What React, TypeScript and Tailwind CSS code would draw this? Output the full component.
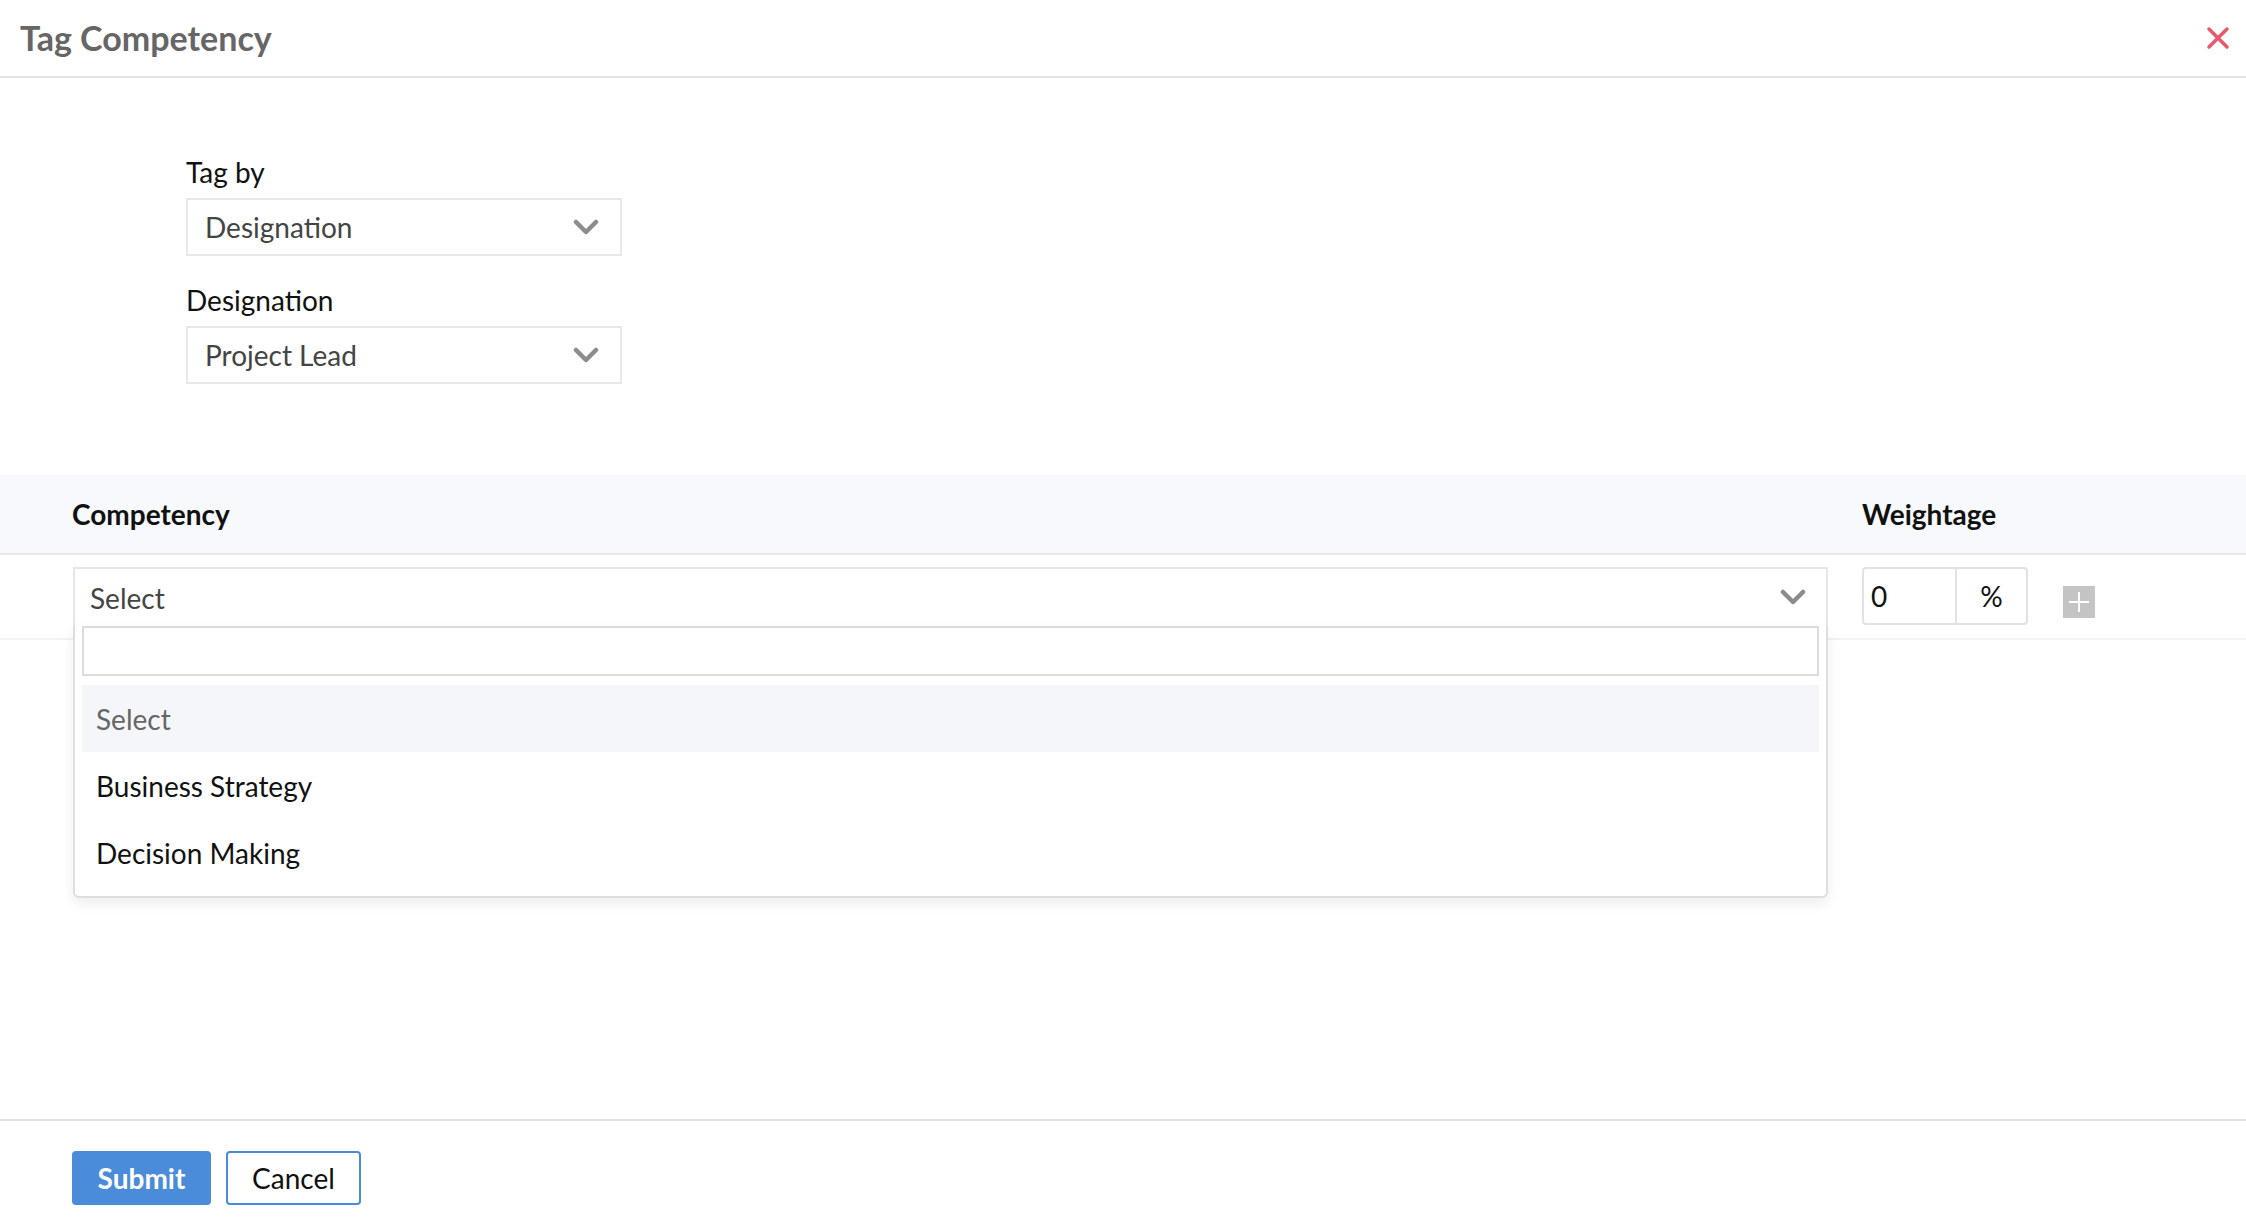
import React from "react";

function Chevron({ className = "" }: { className?: string }) {
  return (
    <svg width="26" height="17" viewBox="0 0 26 17" className={className}>
      <path d="M3 3 L13 13 L23 3" fill="none" stroke="#8c8c8c" strokeWidth="4.5" strokeLinecap="round" strokeLinejoin="round" />
    </svg>
  );
}

function SelectBox({ value }: { value: string }) {
  return (
    <div className="w-[436px] h-[58px] border-2 border-[#e8e8e8] flex items-center justify-between pl-[17px] pr-[21px] bg-white">
      <span className="text-[28px] text-[#444]">{value}</span>
      <Chevron />
    </div>
  );
}

const options = ["Select", "Business Strategy", "Decision Making"];

export default function App() {
  return (
    <div className="w-full h-screen flex flex-col bg-white font-['Lato','Noto_Sans',sans-serif] text-[#111]">
      {/* header */}
      <div className="h-[78px] shrink-0 border-b-2 border-[#e4e4e4] flex items-center justify-between pl-[20px] pr-[16px]">
        <h1 className="text-[34px] font-bold text-[#666] leading-none">Tag Competency</h1>
        <svg width="24" height="24" viewBox="0 0 24 24">
          <path d="M3 3 L21 21 M21 3 L3 21" stroke="#e9586c" strokeWidth="3.5" strokeLinecap="round" />
        </svg>
      </div>

      {/* tag by */}
      <div className="pl-[186px] pt-[76px]">
        <div className="text-[28px] leading-[36px]">Tag by</div>
        <div className="mt-[8px]">
          <SelectBox value="Designation" />
        </div>
        <div className="text-[28px] leading-[36px] mt-[26px]">Designation</div>
        <div className="mt-[8px]">
          <SelectBox value="Project Lead" />
        </div>
      </div>

      {/* table head */}
      <div className="mt-[91px] h-[80px] shrink-0 bg-[#f8f9fc] border-b-2 border-[#e8e8e8] flex items-center pl-[72px]">
        <div className="w-[1790px] text-[28px] font-bold">Competency</div>
        <div className="text-[28px] font-bold">Weightage</div>
      </div>

      {/* row */}
      <div className="pt-[12px] pb-[12px] border-b-2 border-[#f2f2f2] flex items-start pl-[73px]">
        <div className="relative w-[1755px] h-[59px] border-2 border-b-0 border-[#e6e6e6] bg-white flex items-center justify-between pl-[15px] pr-[20px]">
          <span className="text-[28px] text-[#444]">Select</span>
          <Chevron />
          <div className="absolute z-10 left-[-2px] right-[-2px] top-[57px] border-2 border-t-0 border-[#dedede] rounded-b-[6px] bg-white shadow-[0_6px_14px_rgba(0,0,0,0.07)] px-[7px] pb-[10px]">
            <div className="h-[50px] border-2 border-[#dcdcdc] bg-white" />
            <div className="mt-[9px]">
              {options.map((o, i) => (
                <div
                  key={o}
                  className={
                    i === 0
                      ? "h-[67px] flex items-center pl-[14px] text-[28px] bg-[#f5f6fa] text-[#666]"
                      : "h-[67px] flex items-center pl-[14px] text-[28px] text-[#111]"
                  }
                >
                  {o}
                </div>
              ))}
            </div>
          </div>
        </div>

        <div className="ml-[34px] w-[166px] h-[58px] border-2 border-[#e2e2e2] rounded-[4px] flex">
          <div className="w-[93px] border-r-2 border-[#e2e2e2] flex items-center pl-[7px] text-[28px]">0</div>
          <div className="flex-1 flex items-center justify-center text-[28px]">%</div>
        </div>

        <div className="ml-[35px] mt-[19px] w-[32px] h-[32px] bg-[#c4c4c4] flex items-center justify-center">
          <svg width="20" height="20" viewBox="0 0 20 20">
            <path d="M10 0 V20 M0 10 H20" stroke="#fff" strokeWidth="2" />
          </svg>
        </div>
      </div>

      {/* footer */}
      <div className="mt-auto h-[111px] shrink-0 border-t-2 border-[#e4e4e4] pt-[30px] pl-[72px] flex items-start">
        <button className="w-[139px] h-[54px] bg-[#4a8cd9] rounded-[4px] text-white text-[28px] font-bold">
          Submit
        </button>
        <button className="ml-[15px] w-[135px] h-[54px] bg-white border-2 border-[#4a8cd9] rounded-[4px] text-[28px] text-[#111]">
          Cancel
        </button>
      </div>
    </div>
  );
}
